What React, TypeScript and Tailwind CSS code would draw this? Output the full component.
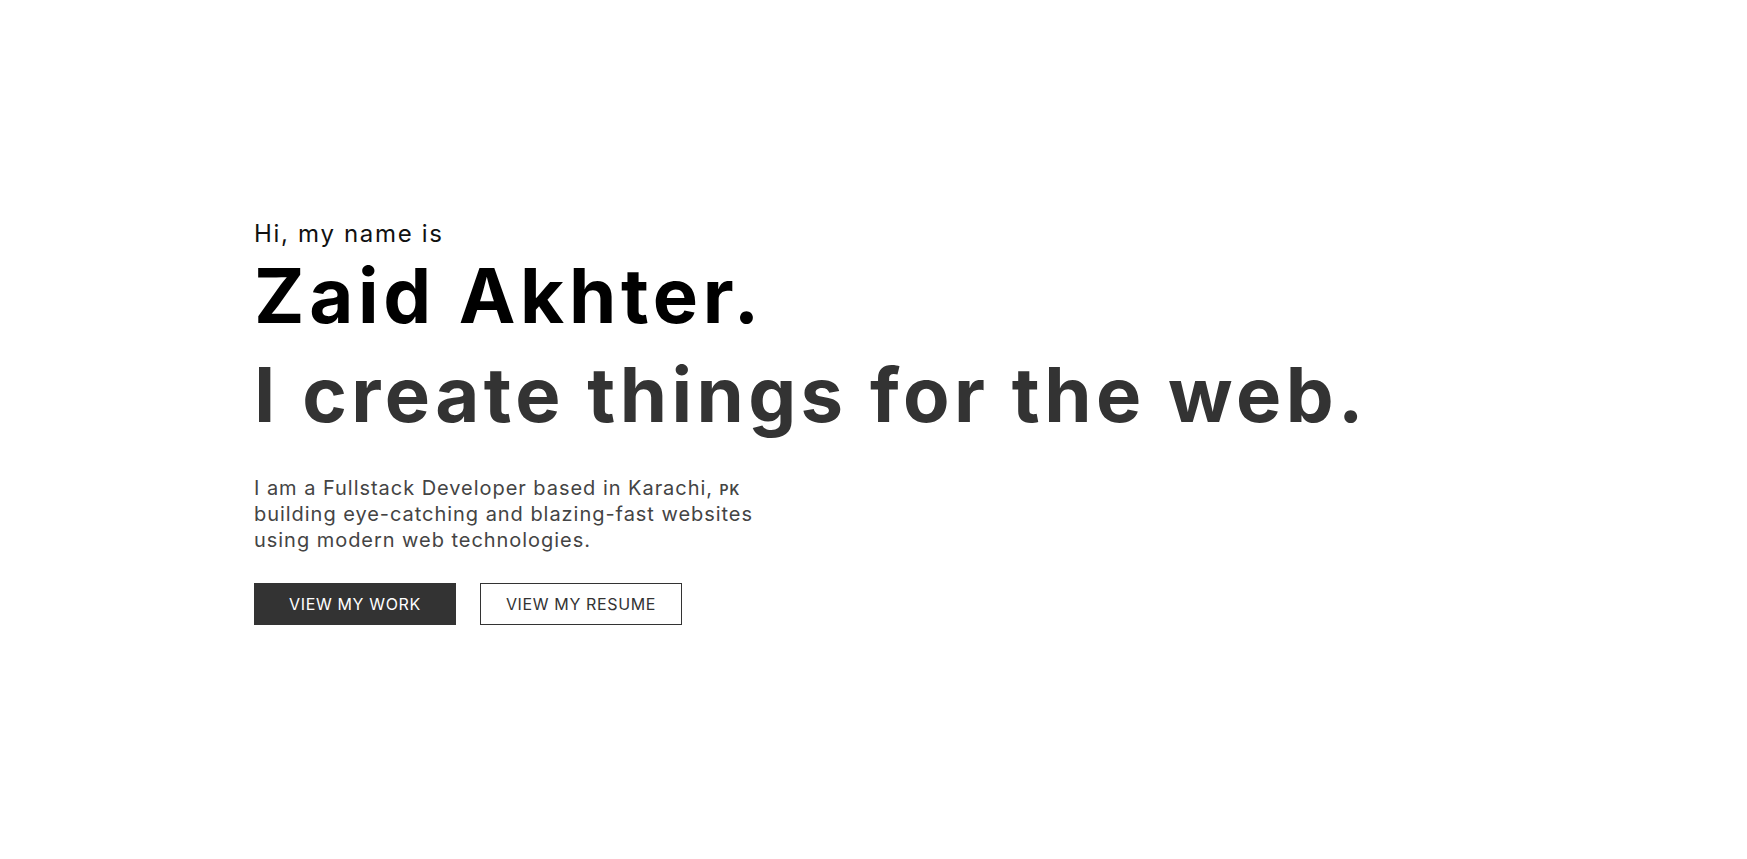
export default function App() {
  return (
    <main
      className="min-h-screen bg-white flex items-center px-[254px] pb-[15px]"
      style={{ fontFamily: "Inter, 'Noto Sans', sans-serif" }}
    >
      <section className="flex flex-col items-start">
        {/* Intro */}
        <p className="text-[24px] leading-[30px] tracking-[0.07em] text-[#111]">
          Hi, my name is
        </p>
        <h1 className="text-[76px] leading-[92px] tracking-[0.062em] font-bold text-black">
          Zaid Akhter.
        </h1>
        <h2 className="text-[76px] leading-[106px] tracking-[0.058em] font-bold text-[#333]">
          I create things for the web.
        </h2>

        {/* Description */}
        <p className="mt-[29px] text-[20px] leading-[25.5px] tracking-[0.048em] text-[#444]">
          I am a Fullstack Developer based in Karachi,{" "}
          <span className="text-[14px] font-semibold">PK</span>
          <br />
          building eye-catching and blazing-fast websites
          <br />
          using modern web technologies.
        </p>

        {/* Actions */}
        <div className="mt-[30px] flex gap-6">
          <button className="w-[202px] h-[42px] bg-[#333] text-white text-[16px] tracking-[0.04em] uppercase">
            View my work
          </button>
          <button className="w-[202px] h-[42px] border border-[#333] text-[#333] text-[16px] tracking-[0.04em] uppercase">
            View my resume
          </button>
        </div>
      </section>
    </main>
  );
}
